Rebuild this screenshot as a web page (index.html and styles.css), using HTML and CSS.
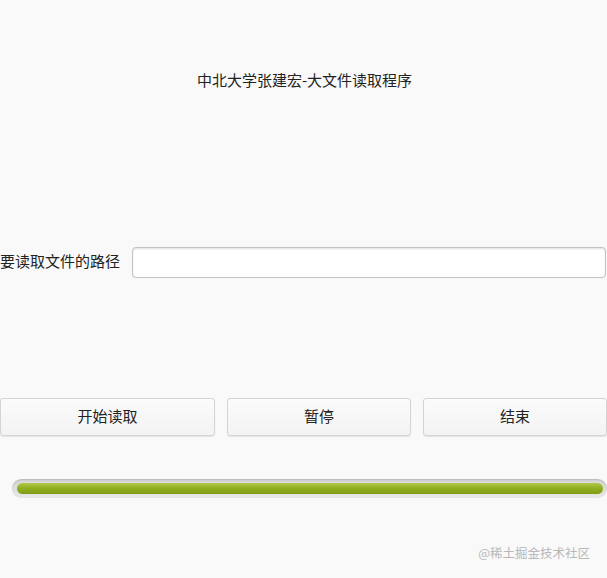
FILE: index.html
```html
<!DOCTYPE html>
<html lang="zh-CN">
<head>
    <meta charset="UTF-8">
    <title>大文件读取程序</title>
    <link rel="stylesheet" href="styles.css">
</head>
<body>
    <div class="app">
        <div class="title">中北大学张建宏-大文件读取程序</div>

        <div class="path-row">
            <label class="path-label" for="pathInput">要读取文件的路径</label>
            <input type="text" id="pathInput" class="path-input">
        </div>

        <div class="buttons">
            <button class="btn btn-start">开始读取</button>
            <button class="btn btn-pause">暂停</button>
            <button class="btn btn-stop">结束</button>
        </div>

        <div class="progress">
            <div class="progress-fill" style="width: 100%"></div>
        </div>

        <div class="watermark">@稀土掘金技术社区</div>
    </div>
</body>
</html>
```

FILE: styles.css
```css
html, body {
    margin: 0;
    padding: 0;
    background-color: #f9f9f9;
}

body {
    font-family: "Noto Sans CJK SC", "DejaVu Sans", sans-serif;
    color: #222;
    width: 607px;
    height: 578px;
    overflow: hidden;
}

.app {
    display: flex;
    flex-direction: column;
    height: 578px;
}

.title {
    margin-top: 70px;
    height: 20px;
    line-height: 20px;
    font-size: 15px;
    text-align: center;
    padding-left: 2px;
}

.path-row {
    display: flex;
    align-items: center;
    margin-top: 157px;
    height: 31px;
}

.path-label {
    font-size: 15px;
    width: 132px;
    line-height: 27px;
    padding-bottom: 4px;
    white-space: nowrap;
}

.path-input {
    flex: 1;
    height: 31px;
    box-sizing: border-box;
    margin: 0 1px 0 0;
    border: 1px solid #c4c4c4;
    border-radius: 4px;
    background-color: #fff;
    box-shadow: inset 0 1px 2px rgba(0, 0, 0, 0.12), 0 0 1px rgba(0, 0, 0, 0.1);
    outline: none;
}

.buttons {
    display: flex;
    margin-top: 120px;
    height: 38px;
}

.btn {
    height: 38px;
    box-sizing: border-box;
    border: 1px solid #d4d4d4;
    border-radius: 3px;
    background: linear-gradient(#fbfbfb, #f3f3f3);
    box-shadow: 0 1px 1px rgba(0, 0, 0, 0.08);
    font-family: inherit;
    font-size: 15px;
    color: #222;
    padding: 0 0 4px 0;
}

.btn-start {
    width: 215px;
}

.btn-pause {
    width: 184px;
    margin-left: 12px;
}

.btn-stop {
    width: 184px;
    margin-left: 12px;
}

.progress {
    margin: 43px 0 0 12px;
    height: 19px;
    box-sizing: border-box;
    padding: 4px 4px 4px 5px;
    border-radius: 10px;
    background: linear-gradient(#d6d6d6, #e8e8e8);
    box-shadow: inset 0 1px 2px rgba(0, 0, 0, 0.15);
}

.progress-fill {
    height: 11px;
    border-radius: 6px;
    background: linear-gradient(#b2c84a, #92b022 45%, #7f9c14);
}

.watermark {
    margin-top: 46px;
    align-self: flex-end;
    margin-right: 17px;
    font-size: 12.5px;
    color: #b8b8b8;
    line-height: 18px;
}
```
